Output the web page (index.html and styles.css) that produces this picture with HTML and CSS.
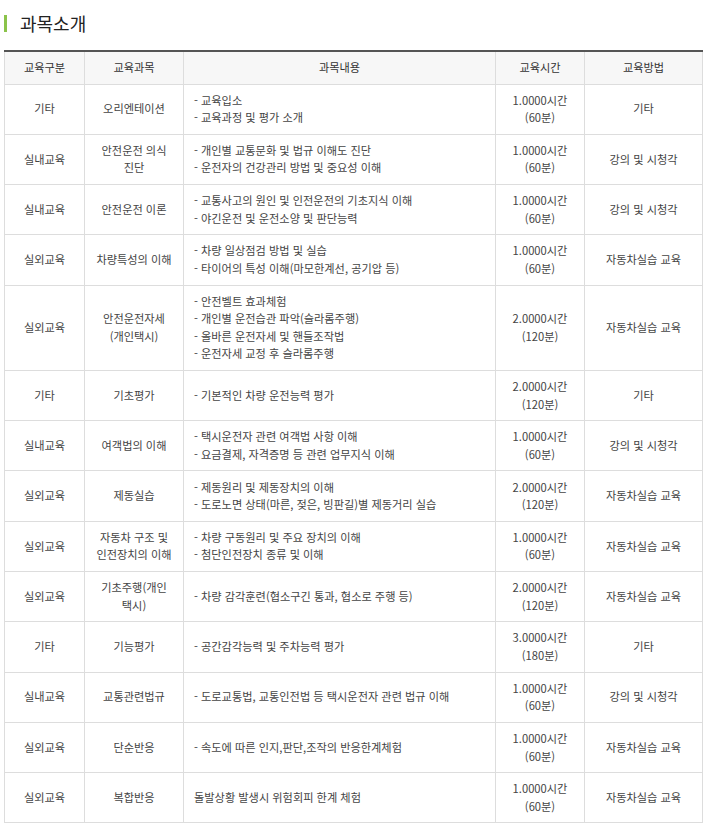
FILE: index.html
```html
<!DOCTYPE html>
<html lang="ko">
<head>
<meta charset="utf-8">
<link rel="stylesheet" href="styles.css">
</head>
<body>
<div class="wrap">
  <h2 class="title">과목소개</h2>
  <table class="course">
    <colgroup>
      <col class="c1"><col class="c2"><col class="c3"><col class="c4"><col class="c5">
    </colgroup>
    <thead>
      <tr><th>교육구분</th><th>교육과목</th><th>과목내용</th><th>교육시간</th><th>교육방법</th></tr>
    </thead>
    <tbody>
      <tr><td>기타</td><td>오리엔테이션</td><td class="desc">- 교육입소<br>- 교육과정 및 평가 소개</td><td>1.0000시간<br>(60분)</td><td>기타</td></tr>
      <tr><td>실내교육</td><td>안전운전 의식<br>진단</td><td class="desc">- 개인별 교통문화 및 법규 이해도 진단<br>- 운전자의 건강관리 방법 및 중요성 이해</td><td>1.0000시간<br>(60분)</td><td>강의 및 시청각</td></tr>
      <tr><td>실내교육</td><td>안전운전 이론</td><td class="desc">- 교통사고의 원인 및 인전운전의 기초지식 이해<br>- 야긴운전 및 운전소양 및 판단능력</td><td>1.0000시간<br>(60분)</td><td>강의 및 시청각</td></tr>
      <tr><td>실외교육</td><td>차량특성의 이해</td><td class="desc">- 차량 일상점검 방법 및 실습<br>- 타이어의 특성 이해(마모한계선, 공기압 등)</td><td>1.0000시간<br>(60분)</td><td>자동차실습 교육</td></tr>
      <tr><td>실외교육</td><td>안전운전자세<br>(개인택시)</td><td class="desc">- 안전벨트 효과체험<br>- 개인별 운전습관 파악(슬라롬주행)<br>- 올바른 운전자세 및 핸들조작법<br>- 운전자세 교정 후 슬라롬주행</td><td>2.0000시간<br>(120분)</td><td>자동차실습 교육</td></tr>
      <tr><td>기타</td><td>기초평가</td><td class="desc">- 기본적인 차량 운전능력 평가</td><td>2.0000시간<br>(120분)</td><td>기타</td></tr>
      <tr><td>실내교육</td><td>여객법의 이해</td><td class="desc">- 택시운전자 관련 여객법 사항 이해<br>- 요금결제, 자격증명 등 관련 업무지식 이해</td><td>1.0000시간<br>(60분)</td><td>강의 및 시청각</td></tr>
      <tr><td>실외교육</td><td>제동실습</td><td class="desc">- 제동원리 및 제동장치의 이해<br>- 도로노면 상태(마른, 젖은, 빙판길)별 제동거리 실습</td><td>2.0000시간<br>(120분)</td><td>자동차실습 교육</td></tr>
      <tr><td>실외교육</td><td>자동차 구조 및<br>인전장치의 이해</td><td class="desc">- 차량 구동원리 및 주요 장치의 이해<br>- 첨단인전장치 종류 및 이해</td><td>1.0000시간<br>(60분)</td><td>자동차실습 교육</td></tr>
      <tr><td>실외교육</td><td>기초주행(개인<br>택시)</td><td class="desc">- 차량 감각훈련(협소구긴 통과, 협소로 주행 등)</td><td>2.0000시간<br>(120분)</td><td>자동차실습 교육</td></tr>
      <tr><td>기타</td><td>기능평가</td><td class="desc">- 공간감각능력 및 주차능력 평가</td><td>3.0000시간<br>(180분)</td><td>기타</td></tr>
      <tr><td>실내교육</td><td>교통관련법규</td><td class="desc">- 도로교통법, 교통인전법 등 택시운전자 관련 법규 이해</td><td>1.0000시간<br>(60분)</td><td>강의 및 시청각</td></tr>
      <tr><td>실외교육</td><td>단순반응</td><td class="desc">- 속도에 따른 인지,판단,조작의 반응한계체험</td><td>1.0000시간<br>(60분)</td><td>자동차실습 교육</td></tr>
      <tr><td>실외교육</td><td>복합반응</td><td class="desc">돌발상황 발생시 위험회피 한계 체험</td><td>1.0000시간<br>(60분)</td><td>자동차실습 교육</td></tr>
    </tbody>
  </table>
</div>
</body>
</html>
```

FILE: styles.css
```css
html, body {
  margin: 0;
  padding: 0;
  background: #fff;
}
body {
  font-family: "Noto Sans CJK KR", "Noto Sans", sans-serif;
  color: #333;
}
.wrap {
  padding: 15px 5px 0 4px;
}
.title {
  margin: 0 0 18px 0;
  padding-left: 13px;
  border-left: 3px solid #8bc34a;
  font-size: 18px;
  font-weight: 400;
  line-height: 17px;
  height: 17px;
  color: #222;
  display: flex;
  align-items: center;
}
.course {
  width: 698px;
  border-collapse: collapse;
  table-layout: fixed;
  border-top: 2px solid #555;
  font-size: 11.2px;
  line-height: 17.5px;
}
.c1 { width: 80px; }
.c2 { width: 99px; }
.c3 { width: 312px; }
.c4 { width: 89px; }
.c5 { width: 118px; }
th, td {
  border: 1px solid #ddd;
  text-align: center;
  vertical-align: middle;
  padding: 7.15px 4px;
  color: #444;
}
th {
  border-top: none;
  background: #f7f7f7;
  font-weight: 400;
  color: #333;
  height: 17px;
  padding: 7px 4px;
}
td.desc {
  text-align: left;
  padding-left: 10px;
}
```
